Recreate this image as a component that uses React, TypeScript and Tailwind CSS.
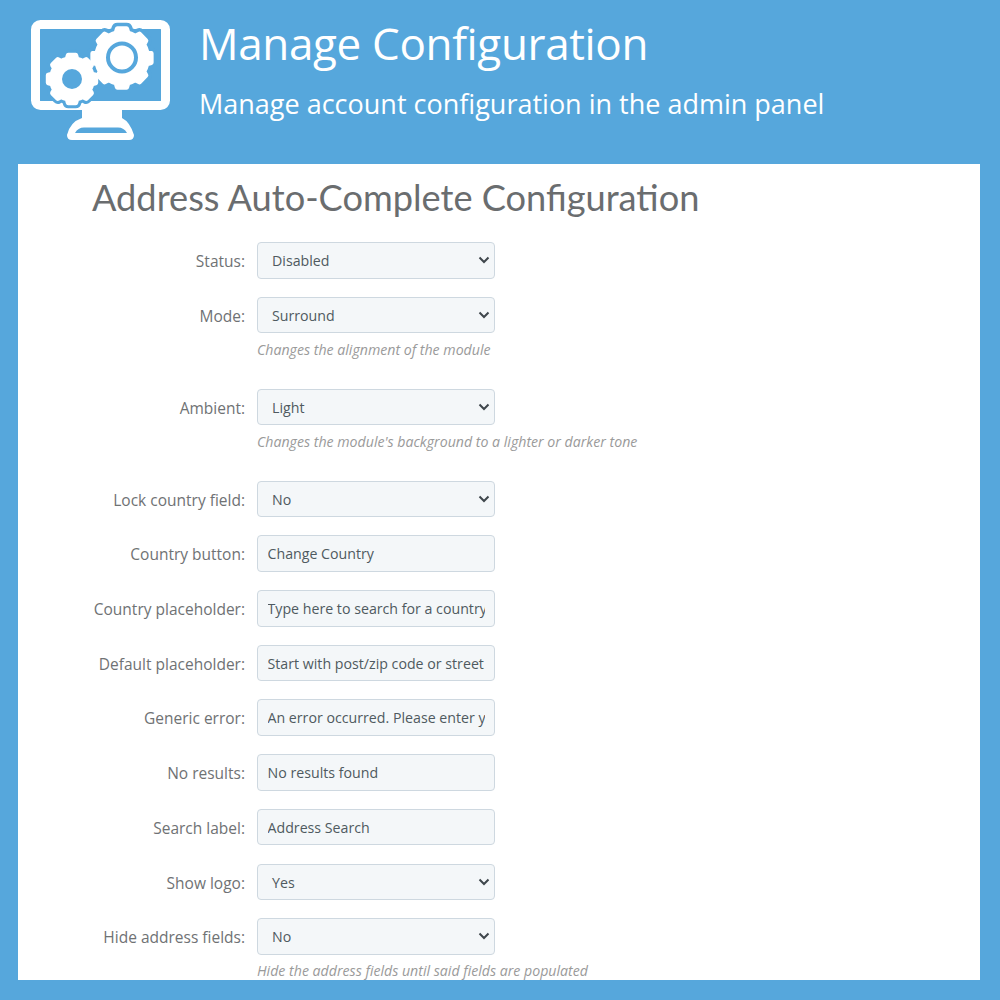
import React from "react";

function gearPath(cx: number, cy: number, rOut: number, rIn: number, teeth: number, rot: number) {
  const pts: string[] = [];
  const step = (Math.PI * 2) / teeth;
  for (let i = 0; i < teeth; i++) {
    const a = rot + i * step;
    const seq: [number, number][] = [
      [rIn, a - step * 0.5],
      [rIn, a - step * 0.3],
      [rOut, a - step * 0.2],
      [rOut, a + step * 0.2],
      [rIn, a + step * 0.3],
    ];
    for (const [r, t] of seq) pts.push(`${(cx + r * Math.sin(t)).toFixed(2)},${(cy - r * Math.cos(t)).toFixed(2)}`);
  }
  return "M" + pts.join("L") + "Z";
}

function Logo() {
  const blue = "#56a7dc";
  const big = gearPath(122, 58, 29.5, 25.5, 8, 0);
  const small = gearPath(72, 79, 24, 20.5, 8, 0);
  return (
    <svg width="140" height="122" viewBox="30 20 140 122" className="shrink-0">
      <rect x="35.500" y="24.500" width="130" height="81" rx="5" fill="none" stroke="white" strokeWidth="9" />
      <path d="M82 108 L82 118 Q70 122 67 135 Q67 140 72 140 L129 140 Q134 140 134 135 Q130 122 122 118 L122 108 Z" fill="white" />
      <path d="M75 133 Q78 127.500 84 127.500 L118 127.500 Q124 127.500 127 133 Z" fill={blue} />
      <path d={big} fill={blue} stroke={blue} strokeWidth="12" strokeLinejoin="round" />
      <path d={small} fill={blue} stroke={blue} strokeWidth="11" strokeLinejoin="round" />
      <path d={big} fill="white" stroke="white" strokeWidth="5" strokeLinejoin="round" />
      <path d={small} fill="white" stroke="white" strokeWidth="5" strokeLinejoin="round" />
      <circle cx="122" cy="57.500" r="14" fill="white" stroke={blue} strokeWidth="4" />
      <circle cx="72" cy="79" r="10" fill={blue} />
    </svg>
  );
}

const ctl =
  "block w-[238px] h-[36.500px] rounded-[4px] border border-[#ced8e0] bg-[#f4f7f9] text-[14.200px] text-[#4f5a60] outline-none";

function Row({ label, select, input, hint, mb }: { label: string; select?: string; input?: string; hint?: string; mb: string }) {
  return (
    <div className={`flex items-start gap-3 ${mb}`}>
      <label className="h-[36.500px] w-[227px] shrink-0 text-right text-[15.500px] leading-[38px] text-[#6f7274]">{label}</label>
      <div>
        {select !== undefined ? (
          <div className={`${ctl} relative pl-[14px] leading-[36px]`}>
            <span>{select}</span>
            <svg className="absolute right-[4px] top-[12px]" width="12" height="10" viewBox="0 0 12 10" fill="none">
              <path d="M1.500 2.500 L6 7 L10.500 2.500" stroke="#3f474c" strokeWidth="2" />
            </svg>
          </div>
        ) : (
          <input readOnly value={input} className={`${ctl} px-[9.500px]`} />
        )}
        {hint && <p className="mt-[7.500px] h-[18px] whitespace-nowrap text-[14.150px] italic leading-[18px] text-[#9a9a9a]">{hint}</p>}
      </div>
    </div>
  );
}

export default function App() {
  return (
    <div className="flex h-[1000px] w-[1000px] flex-col overflow-hidden bg-[#56a7dc] font-['Open_Sans',sans-serif]">
      <header className="flex h-[164px] shrink-0 items-start pl-[30px] pt-[20px]">
        <Logo />
        <div className="ml-[30px] text-white">
          <h1 className="-ml-[1px] -mt-[1px] text-[44px] leading-[48px] tracking-[-0.350px]">Manage Configuration</h1>
          <p className="-ml-[1px] mt-[20px] text-[27px] leading-[34px]">Manage account configuration in the admin panel</p>
        </div>
      </header>
      <main className="ml-[18px] h-[816px] w-[962px] overflow-hidden bg-white">
        <h2 className="pl-[74px] pt-[10px] font-['Lato',sans-serif] text-[36.200px] leading-[46px] text-[#6a6d6f]">
          Address Auto-Complete Configuration
        </h2>
        <div className="mt-[22px]">
          <Row label="Status:" select="Disabled" mb="mb-[18.200px]" />
          <Row label="Mode:" select="Surround" hint="Changes the alignment of the module" mb="mb-[30px]" />
          <Row label="Ambient:" select="Light" hint="Changes the module's background to a lighter or darker tone" mb="mb-[30px]" />
          <Row label="Lock country field:" select="No" mb="mb-[18.200px]" />
          <Row label="Country button:" input="Change Country" mb="mb-[18.200px]" />
          <Row label="Country placeholder:" input="Type here to search for a country" mb="mb-[18.200px]" />
          <Row label="Default placeholder:" input="Start with post/zip code or street" mb="mb-[18.200px]" />
          <Row label="Generic error:" input="An error occurred. Please enter your address" mb="mb-[18.200px]" />
          <Row label="No results:" input="No results found" mb="mb-[18.200px]" />
          <Row label="Search label:" input="Address Search" mb="mb-[18.200px]" />
          <Row label="Show logo:" select="Yes" mb="mb-[18.200px]" />
          <Row label="Hide address fields:" select="No" hint="Hide the address fields until said fields are populated" mb="mb-0" />
        </div>
      </main>
    </div>
  );
}
